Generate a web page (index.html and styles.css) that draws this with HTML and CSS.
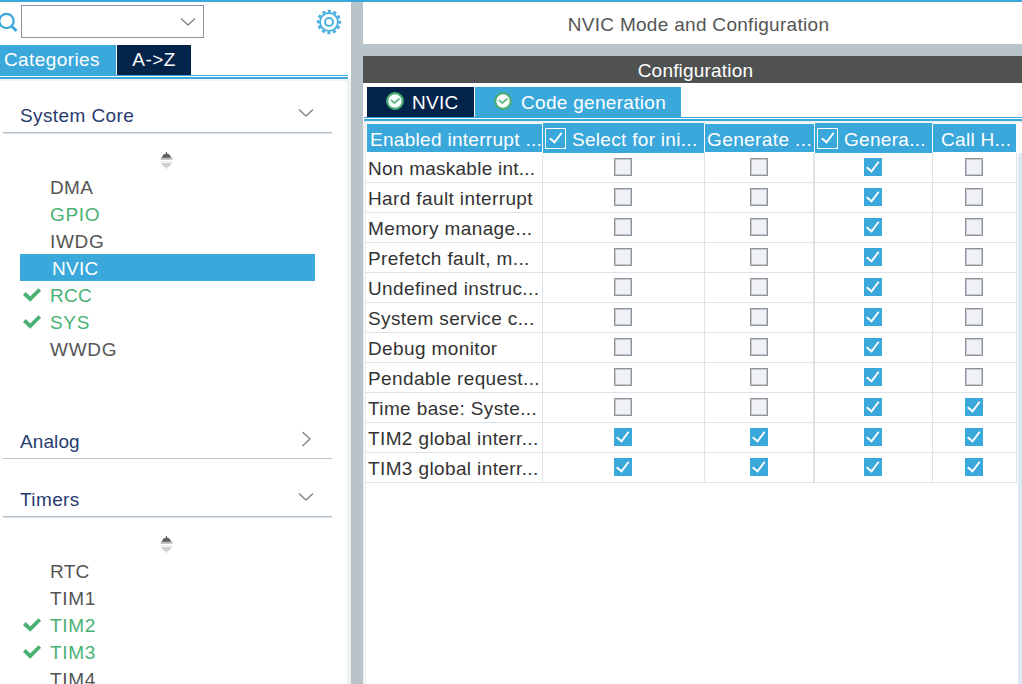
FILE: index.html
```html
<!DOCTYPE html>
<html lang="en">
<head>
<meta charset="utf-8">
<title>NVIC Mode and Configuration</title>
<link rel="stylesheet" href="styles.css">
</head>
<body>
<svg class="defs" width="0" height="0">
  <symbol id="down" viewBox="0 0 16 10"><path d="M1 1.5L8 8L15 1.5" fill="none" stroke="#858585" stroke-width="1.4"/></symbol>
  <symbol id="right" viewBox="0 0 10 16"><path d="M1.5 1L9 8L1.5 15" fill="none" stroke="#858585" stroke-width="1.4"/></symbol>
  <symbol id="tick" viewBox="0 0 20 16"><path d="M2.3 6.5L8.2 12L17.8 2.5" fill="none" stroke="#49b174" stroke-width="3.8"/></symbol>
  <symbol id="sort" viewBox="0 0 13 17"><path d="M6 0H7V1.5L9.5 2.5L11.5 6H1.5L3.5 2.5L6 1.5Z" fill="#606060"/><path d="M.5 5.8h12v2H.5z" fill="#bcbcbc"/><path d="M.5 9h12v1.5H.5z" fill="#eee"/><path d="M1 11h11L9.5 14.5L7 15.5V17H6V15.5L3.5 14.5Z" fill="#cfcfcf"/></symbol>
  <symbol id="status" viewBox="0 0 18 18"><circle cx="9" cy="9" r="7.8" fill="#fff" stroke="#49ad74" stroke-width="2.2"/><path d="M4.8 8L8.4 11L13.6 6.5" fill="none" stroke="#62bd88" stroke-width="1.9"/></symbol>
  <symbol id="check" viewBox="0 0 18 18"><path d="M2.7 9.3L7.5 13.3L14.7 3.8" fill="none" stroke="#fff" stroke-width="1.9"/></symbol>
</svg>
<div class="app">
  <aside class="side">
    <div class="search">
      <svg class="lens" width="18" height="24" viewBox="0 0 18 24"><circle cx="6.5" cy="11" r="7.2" fill="none" stroke="#3ba8dc" stroke-width="2.2"/><path d="M11.5 16L16.5 21" stroke="#3ba8dc" stroke-width="2.8"/></svg>
      <div class="combo"><svg width="16" height="10"><use href="#down"/></svg></div>
      <svg class="gear" width="26" height="26" viewBox="-13 -13 26 26"><g fill="none" stroke="#49b0e0"><circle r="11" stroke-width="2.4" stroke-dasharray="3.2 2.56" stroke-dashoffset="1.6"/><circle r="9" stroke-width="2"/><circle r="4" stroke-width="2"/></g></svg>
    </div>
    <div class="tabs side-tabs">
      <div class="tab cat">Categories</div><div class="tab dark az">A-&gt;Z</div>
    </div>
    <div class="rules side-rules"></div>
    <div class="tree">
      <section class="group core">
        <h2>System Core<svg width="16" height="10"><use href="#down"/></svg></h2>
        <svg class="sort" width="13" height="17"><use href="#sort"/></svg>
        <ul>
          <li>DMA</li>
          <li class="green wide">GPIO</li>
          <li class="wide">IWDG</li>
          <li class="selected">NVIC</li>
          <li class="green"><svg width="20" height="16"><use href="#tick"/></svg>RCC</li>
          <li class="green wide"><svg width="20" height="16"><use href="#tick"/></svg>SYS</li>
          <li class="wide">WWDG</li>
        </ul>
      </section>
      <section class="group analog">
        <h2>Analog<svg width="10" height="16"><use href="#right"/></svg></h2>
      </section>
      <section class="group">
        <h2>Timers<svg width="16" height="10"><use href="#down"/></svg></h2>
        <svg class="sort" width="13" height="17"><use href="#sort"/></svg>
        <ul>
          <li>RTC</li>
          <li class="wide">TIM1</li>
          <li class="green wide"><svg width="20" height="16"><use href="#tick"/></svg>TIM2</li>
          <li class="green wide"><svg width="20" height="16"><use href="#tick"/></svg>TIM3</li>
          <li class="wide">TIM4</li>
        </ul>
      </section>
    </div>
  </aside>
  <main class="main">
    <h1 class="title">NVIC Mode and Configuration</h1>
    <div class="bar">Configuration</div>
    <div class="panel">
      <div class="tabs main-tabs">
        <div class="tab dark nvic"><svg width="18" height="18"><use href="#status"/></svg>NVIC</div>
        <div class="tab code"><svg width="18" height="18"><use href="#status"/></svg>Code generation</div>
      </div>
      <div class="rules"></div>
      <div class="content">
        <div class="grid">
          <div class="row head">
            <div class="first">Enabled interrupt ...</div>
            <div class="full"><span class="hbox"><svg width="18" height="18"><use href="#check"/></svg></span>Select for ini...</div>
            <div class="gen">Generate ...</div>
            <div class="full"><span class="hbox"><svg width="18" height="18"><use href="#check"/></svg></span>Genera...</div>
            <div class="call">Call H...</div>
          </div>
          <div id="rows"></div>
        </div>
        <div class="scroll"></div>
      </div>
    </div>
  </main>
</div>
<script src="table.js"></script>
</body>
</html>
```
FILE: styles.css
```css
* { box-sizing: border-box; margin: 0; padding: 0; }
body { width: 1022px; height: 684px; overflow: hidden; background: #fff; font: 19px/27px "Liberation Sans", Arial, sans-serif; letter-spacing: .3px; color: #555; }
h1, h2 { font: inherit; }
ul { list-style: none; }
svg { display: block; flex: none; }
.defs { position: absolute; }
.app { display: flex; height: 684px; border-top: 2px solid #3ba8dc; overflow: hidden; }
.side { width: 351px; flex: none; display: flex; flex-direction: column; overflow: hidden; }
.search { height: 43px; flex: none; display: flex; align-items: flex-start; padding-top: 3px; }
.lens { margin: 5px 3px 0 0; }
.combo { width: 183px; height: 33px; border: 1px solid #8d959c; display: flex; justify-content: flex-end; align-items: center; padding-right: 7px; }
.gear { margin: 4px 0 0 112px; }
.tabs { display: flex; height: 30px; flex: none; gap: 1px; }
.tab { display: flex; align-items: center; background: #3ba8dc; color: #fff; }
.side-tabs .tab { padding-bottom: 2px; }
.dark { background: #03234b; }
.tabs .dark { background: #03234b; }
.cat { width: 116px; padding-left: 4px; letter-spacing: .4px; }
.az { width: 74px; justify-content: center; letter-spacing: .4px; }
.rules { height: 4px; flex: none; border-top: 1px solid #3ba8dc; border-bottom: 2px solid #3ba8dc; }
.side-rules { width: 348px; }
.tree { flex: 1; min-height: 0; overflow: hidden; border-top: 2px solid #eff1f3; border-right: 4px solid #eff1f3; padding-top: 16px; }
.group { width: 329px; margin-left: 3px; }
.core { height: 326px; }
.analog { height: 58px; }
.group h2 { height: 36px; border-bottom: 1px solid #b8c4cb; box-shadow: 0 1px #d9dfe8; display: flex; justify-content: space-between; align-items: center; padding: 2px 18px 0 17px; color: #273b70; letter-spacing: .4px; }
.group h2 svg { margin-top: -6px; }
.analog h2 { box-shadow: none; letter-spacing: .1px; }
.analog h2 svg { margin-right: 3px; }
.sort { margin: 19px 0 4px 157px; }
.group li { width: 295px; height: 27px; margin-left: 17px; display: flex; align-items: center; padding: 1px 0 0 30px; }
.group li svg { margin: 0 8px 0 -28px; }
.green { color: #49b174; }
.group .wide { letter-spacing: .7px; }
.group .selected { background: #3ba8dc; color: #fff; padding-left: 32px; }
.main { flex: 1; min-width: 0; border-left: 12px solid #b8c4ca; display: flex; flex-direction: column; }
.title { height: 54px; flex: none; border-bottom: 12px solid #b8c4ca; padding: 3px 0 0 12px; text-align: center; line-height: 39px; }
.bar { height: 27px; flex: none; background: #505251; color: #fff; text-align: center; padding: 1px 0 0 6px; letter-spacing: .2px; }
.panel { flex: 1; display: flex; flex-direction: column; padding: 4px 0 0 1px; }
.main-tabs { padding-left: 3px; }
.main-tabs svg { margin-top: -2px; }
.nvic { width: 107px; padding-left: 19px; gap: 8px; }
.code { width: 206px; padding-left: 19px; gap: 9px; }
.content { flex: 1; margin-left: -1px; display: flex; border-top: 2px solid #eff1f3; border-left: 3px solid #eff1f3; }
.grid { width: 651px; }
.row { display: grid; grid-template-columns: 177px 162px 110px 118px 84px; height: 30px; color: #333; }
.row > div { border-right: 1px solid #e0e3e6; border-bottom: 1px solid #e0e3e6; display: flex; align-items: center; white-space: nowrap; overflow: hidden; }
.row > div:nth-child(3) { border-right-width: 2px; }
.row .label { padding: 1px 0 0 2px; letter-spacing: .38px; }
#rows .row:first-child .label { letter-spacing: .25px; }
.cell { justify-content: center; }
.row .cell { padding-right: 2px; }
.row .cell:nth-child(3) { padding-right: 0; }
.row .cell:nth-child(4) { padding-right: 1px; }
.row .cell:nth-child(5) { padding-right: 1px; }
.box { width: 18px; height: 18px; margin-top: -1px; border: 1px solid #8d959b; box-shadow: inset 0 0 0 1px #c2c8cd; background: #f0f1f4; }
.on { border: 0; box-shadow: none; background: #3ba8dc; }
.row.head > div { background: #3ba8dc; color: #fff; border: 1px solid #fff; border-left: 0; padding-top: 2px; }
.row.head > .full { border-top-color: #3ba8dc; border-bottom-color: #3ba8dc; padding-left: 2px; }
.row.head .first { border-left: 1px solid #fff; padding-left: 3px; }
.row.head .gen { padding-left: 2px; letter-spacing: .4px; }
.row.head .call { padding-left: 8px; }
.hbox { width: 21px; height: 21px; border: 1px solid #fff; padding: 0; margin: -2px 6px 0 0; display: flex; align-items: center; justify-content: center; }
.scroll { width: 4px; margin: 30px 0 0 auto; background: #dbe9f5; }
```
FILE: table.js
```js
// Label followed by the state of the four option columns.
const interrupts = [
  ["Non maskable int...", "0010"],
  ["Hard fault interrupt", "0010"],
  ["Memory manage...", "0010"],
  ["Prefetch fault, m...", "0010"],
  ["Undefined instruc...", "0010"],
  ["System service c...", "0010"],
  ["Debug monitor", "0010"],
  ["Pendable request...", "0010"],
  ["Time base: Syste...", "0011"],
  ["TIM2 global interr...", "1111"],
  ["TIM3 global interr...", "1111"]
];
const checked = '<div class="box on"><svg width="18" height="18"><use href="#check"/></svg></div>';
const empty = '<div class="box"></div>';
document.getElementById("rows").innerHTML = interrupts.map(([label, states]) =>
  `<div class="row"><div class="label">${label}</div>${[...states].map(s =>
    `<div class="cell">${s === "1" ? checked : empty}</div>`).join("")}</div>`).join("");
```
